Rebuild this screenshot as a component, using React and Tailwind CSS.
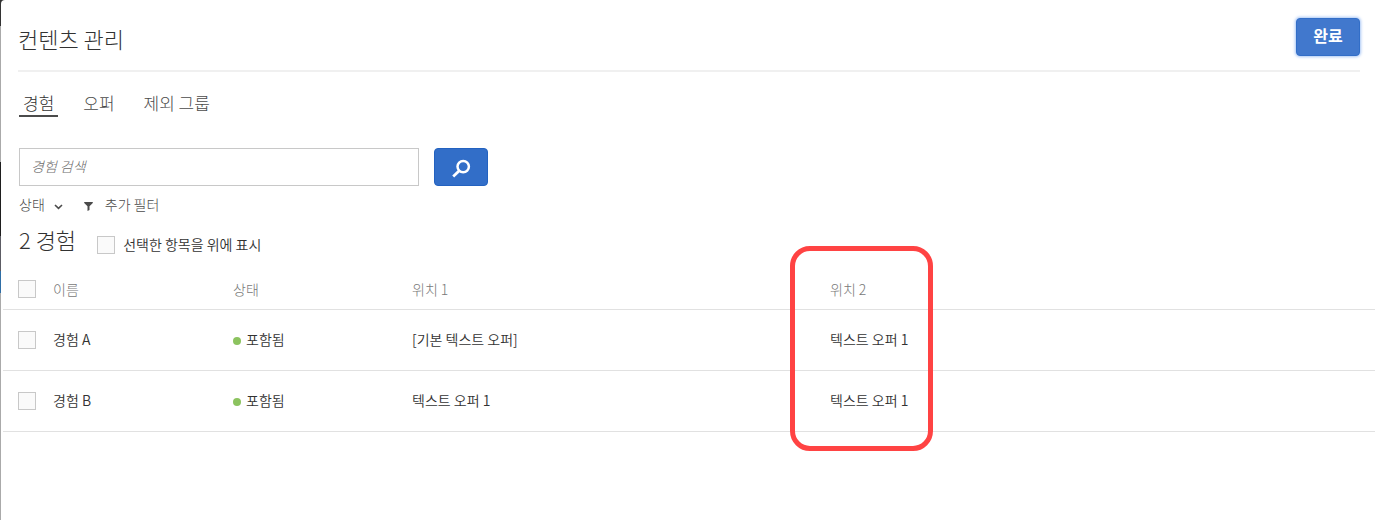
import React from "react";

const TABS = ["경험", "오퍼", "제외 그룹"];

const ROWS = [
  { name: "경험 A", status: "포함됨", first: "[기본 텍스트 오퍼]", second: "텍스트 오퍼 1" },
  { name: "경험 B", status: "포함됨", first: "텍스트 오퍼 1", second: "텍스트 오퍼 1" },
];

function Checkbox(props) {
  return (
    <input
      type="checkbox"
      className="block size-[18px] shrink-0 appearance-none border border-[#c8c8c8] bg-[#fafafa] checked:bg-[#326ec8]"
      {...props}
    />
  );
}

function SearchIcon() {
  return (
    <svg width="20" height="20" viewBox="0 0 20 20" fill="none" aria-hidden="true">
      <circle cx="12.2" cy="8.6" r="5.7" stroke="#fff" strokeWidth="2.5" />
      <path d="M8.2 12.8 L2.2 18.4" stroke="#fff" strokeWidth="2.8" />
    </svg>
  );
}

// Strip of the page that lies behind the dialog
function Backdrop() {
  return (
    <div className="flex w-px shrink-0 flex-col bg-[#aaaaaa]" aria-hidden="true">
      <div className="h-[26px] bg-[#333333]" />
      <div className="h-[136px] bg-[#aaaaaa]" />
      <div className="h-[74px] bg-[#1e1e1e]" />
      <div className="h-[35px] bg-[#5c5c64]" />
      <div className="h-[22px] bg-[#2f6ea6]" />
    </div>
  );
}

export default function App() {
  return (
    <div className="flex min-h-screen bg-[#333333] font-['Noto_Sans_CJK_KR',sans-serif] text-sm text-[#323232]">
      <Backdrop />
      <main className="min-w-0 grow rounded-tl-sm bg-white">
        <header className="mr-4 ml-[17px] flex h-[72px] items-center justify-between border-b-2 border-[#f0f0f0] pt-1">
          <h1 className="pt-0.5 text-[22px] leading-8 font-light text-[#323232]">컨텐츠 관리</h1>
          <button
            type="button"
            className="h-[38px] w-16 rounded border border-[#326ec8] bg-[#4178cd] pb-1 text-base font-bold text-white shadow-[0_0_3px_1px_#a8c6f5]"
          >
            완료
          </button>
        </header>

        <nav className="ml-[18px] flex gap-[21px] pt-[18px]">
          {TABS.map((tab, i) => (
            <a
              key={tab}
              href="#"
              aria-current={i === 0 ? "page" : undefined}
              className={
                i === 0
                  ? "border-b-2 border-[#4b4b4b] px-1 text-[17px] leading-[25px] font-light text-[#323232]"
                  : "border-b-2 border-transparent px-1 text-[17px] leading-[25px] font-light text-[#4b4b4b]"
              }
            >
              {tab}
            </a>
          ))}
        </nav>

        <form className="mt-[31px] ml-[18px] flex gap-[15px]" onSubmit={(e) => e.preventDefault()}>
          <input
            type="search"
            aria-label="경험 검색"
            placeholder="경험 검색"
            className="h-[38px] w-[400px] border border-[#c8c8c8] px-[11px] pb-0.5 font-light placeholder:text-[#6e6e6e] placeholder:italic"
          />
          <button
            type="submit"
            aria-label="검색"
            className="flex h-[38px] w-[54px] items-center justify-center rounded border border-[#2362c0] bg-[#326ec8] pt-0.5"
          >
            <SearchIcon />
          </button>
        </form>

        <div className="mt-[7px] ml-[18px] flex h-[22px] items-center gap-[21px] font-light text-[#4b4b4b]">
          <button type="button" className="flex items-center gap-[9px]">
            상태
            <svg className="mt-1.5" width="9" height="6" viewBox="0 0 9 6" fill="none" aria-hidden="true">
              <path d="M1 1 L4.5 4.3 L8 1" stroke="#4b4b4b" strokeWidth="1.6" />
            </svg>
          </button>
          <button type="button" className="flex items-center gap-3">
            <svg className="mt-1" width="9" height="9" viewBox="0 0 9 9" aria-hidden="true">
              <path d="M0.2 0 H8.8 V0.9 L5.5 4.2 V7.9 L3.5 9 V4.2 L0.2 0.9 Z" fill="#4b4b4b" />
            </svg>
            추가 필터
          </button>
        </div>

        <div className="ml-[18px] flex h-[54px] items-start gap-[21px]">
          <h2 className="pt-2 text-[22px] leading-8 font-light text-[#323232]">2 경험</h2>
          <div className="flex items-center gap-2 pt-5">
            <Checkbox id="selected-first" />
            <label htmlFor="selected-first" className="pb-0.5 leading-[18px] font-[350] text-[#323232]">
              선택한 항목을 위에 표시
            </label>
          </div>
        </div>

        <div className="mr-px ml-0.5">
          <table className="w-full table-fixed border-collapse text-left">
            <colgroup>
              <col className="w-[50px]" />
              <col className="w-[180px]" />
              <col className="w-[179px]" />
              <col className="w-[418px]" />
              <col />
            </colgroup>
            <thead>
              <tr className="h-10 border-b border-[#e1e1e1] text-[#787878]">
                <th className="pl-[15px]">
                  <Checkbox aria-label="모두 선택" />
                </th>
                <th className="font-light">이름</th>
                <th className="font-light">상태</th>
                <th className="font-light">위치 1</th>
                <th className="relative font-light">
                  위치 2
                  <span className="pointer-events-none absolute -top-[23px] -left-10 h-[205px] w-[143px] rounded-[20px] border-[5px] border-[#ff4343]" />
                </th>
              </tr>
            </thead>
            <tbody>
              {ROWS.map((row) => (
                <tr key={row.name} className="h-[61px] border-b border-[#e1e1e1] font-[350]">
                  <td className="pl-[15px]">
                    <Checkbox aria-label={row.name} />
                  </td>
                  <td className="pb-0.5">{row.name}</td>
                  <td className="pb-0.5">
                    <span className="flex items-center gap-[5px]">
                      <span className="mt-1 size-2 rounded-full bg-[#8cc35f]" />
                      {row.status}
                    </span>
                  </td>
                  <td className="pb-0.5">{row.first}</td>
                  <td className="pb-0.5">{row.second}</td>
                </tr>
              ))}
            </tbody>
          </table>
        </div>
      </main>
    </div>
  );
}
